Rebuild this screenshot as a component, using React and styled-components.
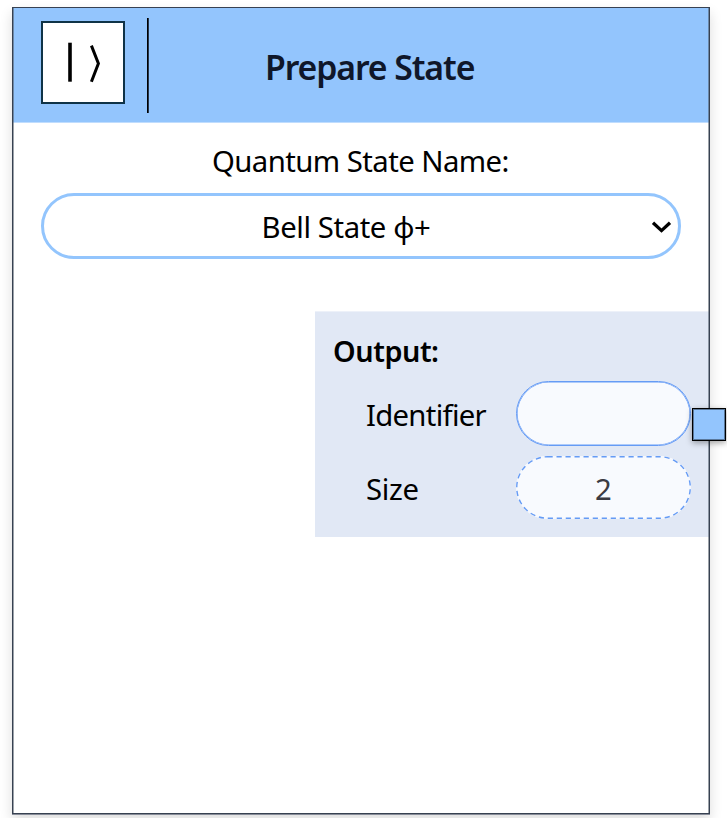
import React from "react";
import styled, { createGlobalStyle } from "styled-components";

const GlobalStyle = createGlobalStyle`
  * { box-sizing: border-box; }
  body {
    margin: 0;
    background: #fff;
    overflow: hidden;
    font-family: "Noto Sans", "Open Sans", sans-serif;
    color: #000;
  }
`;

const Canvas = styled.main`
  height: 818px;
  padding: 7px 17px 0 12px;
  overflow: hidden;
`;

const Node = styled.section`
  position: relative;
  height: 807px;
  border: 1px solid #374151;
  background: #fff;
  box-shadow: 0 1px 0 #878c98, 0 6px 12px rgba(0, 0, 0, 0.14);

  &::after {
    content: "";
    position: absolute;
    inset: 0;
    border: solid rgba(75, 85, 99, 0.55);
    border-width: 0 1px;
    pointer-events: none;
  }
`;

const Header = styled.header`
  display: flex;
  height: 115px;
  padding: 13px 0 0 28px;
  background: #93c5fd;
  border-bottom: 1px solid #c0ddfe;
`;

const IconBox = styled.div`
  width: 84px;
  height: 83px;
  border: 2px solid #0f3347;
  background: #fff;

  svg { display: block; }
`;

const Divider = styled.div`
  width: 2px;
  height: 95px;
  margin: -3px 0 0 22px;
  background: linear-gradient(90deg, #000 50%, #26364a 50%);
`;

const Title = styled.h1`
  margin: 22px 0 0 116px;
  font-size: 33.8px;
  line-height: 48px;
  font-weight: 600;
  letter-spacing: ${(p) => p.$tracking};
  color: #0f172a;
  white-space: nowrap;
`;

const Body = styled.div`
  padding: 0 0 0 28px;
`;

const Label = styled.label`
  display: block;
  height: 70px;
  padding: 17px 0 0 171px;
  font-size: 29.3px;
  line-height: 42px;
  letter-spacing: ${(p) => p.$tracking};
  white-space: nowrap;
`;

const Select = styled.button`
  display: flex;
  align-items: center;
  justify-content: space-between;
  width: 640px;
  height: 66px;
  margin: 0 0 0 -0.5px;
  padding: 2px 5px 0 218px;
  border: 3px solid #93c5fd;
  border-radius: 33px;
  background: #fff;
  color: #000;
  font-family: inherit;
  font-size: 29.3px;
  letter-spacing: ${(p) => p.$tracking};
  white-space: nowrap;

  svg { flex: none; }
`;

const Outputs = styled.div`
  width: 394px;
  height: 226px;
  margin: 52px 0 0 auto;
  padding: 19px 18px 0;
  background: #e1e8f5;
  border-top: 1px solid #edf1f9;
`;

const OutputTitle = styled.h2`
  margin: 0;
  height: 50px;
  font-size: 28.8px;
  line-height: 40px;
  font-weight: 600;
  letter-spacing: ${(p) => p.$tracking};
`;

const Field = styled.div`
  display: flex;
  align-items: center;
  justify-content: space-between;
  height: ${(p) => p.$height};
  margin-bottom: 10px;
  padding-left: ${(p) => p.$indent};
  font-size: 29.3px;
`;

const FieldName = styled.span`
  padding-top: 2px;
  letter-spacing: ${(p) => p.$tracking};
`;

const Pill = styled.div`
  width: 175px;
  height: 100%;
  flex: none;
  display: flex;
  align-items: center;
  justify-content: center;
  padding-top: 3px;
  border: 1px solid #659bf5;
  box-shadow: inset 0 0 0 0.6px #659bf5;
  border-radius: 33px;
  background: #f8fafe;
  color: #3b3b43;
`;

const DashedOutline = styled(Pill)`
  position: relative;
  border-color: transparent;
  box-shadow: none;

  svg {
    position: absolute;
    left: -1px;
    top: -1px;
  }
`;

const Handle = styled.span`
  position: absolute;
  top: 400px;
  right: -17px;
  z-index: 1;
  width: 34px;
  height: 33px;
  border: 1px solid #000;
  box-shadow: 0 2px 6px rgba(0, 0, 0, 0.35), inset 0 0 0 1px #59779a;
  background: #93c5fd;
`;

function KetIcon() {
  return (
    <svg width="80" height="79" viewBox="0 0 80 79" fill="none" stroke="#000">
      <path d="M27 19.7V58.7" strokeWidth="3.6" />
      <path d="M48.4 22.6L55.4 40.5L48.4 58.8" strokeWidth="3" />
    </svg>
  );
}

function Chevron() {
  return (
    <svg width="22" height="16" viewBox="0 0 22 16" fill="none" stroke="#000">
      <path d="M2 3.7L10.5 11.6L19 3.7" strokeWidth="3.3" />
    </svg>
  );
}

function DashRing() {
  return (
    <svg width="175" height="63" viewBox="0 0 175 63" fill="none">
      <rect x=".75" y=".75" width="173.5" height="61.5" rx="30.75" stroke="#f5f8fe" strokeWidth="1.5" />
      <rect x=".75" y=".75" width="173.5" height="61.5" rx="30.75" stroke="#659bf5" strokeWidth="1.4" strokeDasharray="5.2 3.8" />
    </svg>
  );
}

export default function App() {
  return (
    <>
      <GlobalStyle />
      <Canvas>
        <Node>
          <Header>
            <IconBox><KetIcon /></IconBox>
            <Divider />
            <Title $tracking="-1.1px">Prepare State</Title>
          </Header>
          <Body>
            <Label $tracking="-0.56px">Quantum State Name:</Label>
            <Select type="button" $tracking="-0.4px">
              <span>Bell State ϕ+</span>
              <Chevron />
            </Select>
            <Outputs>
              <OutputTitle $tracking="-0.45px">Output:</OutputTitle>
              <Field $height="65px" $indent="33px">
                <FieldName $tracking="-0.7px">Identifier</FieldName>
                <Pill />
              </Field>
              <Field $height="63px" $indent="33px">
                <FieldName $tracking="-0.3px">Size</FieldName>
                <DashedOutline><DashRing />2</DashedOutline>
              </Field>
            </Outputs>
          </Body>
          <Handle />
        </Node>
      </Canvas>
    </>
  );
}
